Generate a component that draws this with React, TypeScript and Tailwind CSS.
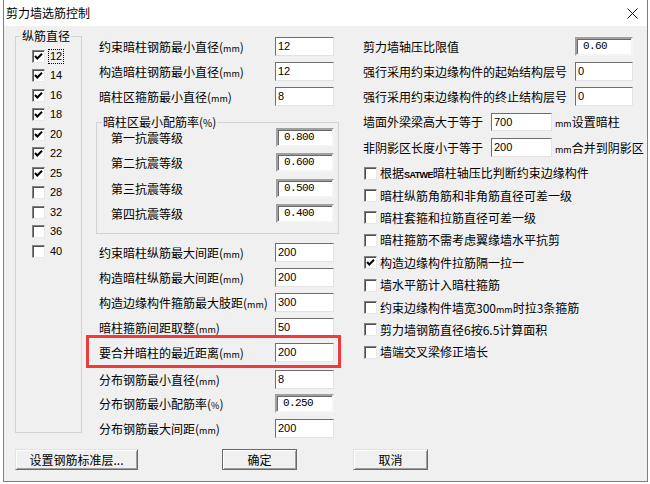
import React from "react";

type Kind = "n" | "s";

function Edit({ v, w, k = "n", h = "h-[19px]" }: { v: string; w: string; k?: Kind; h?: string }) {
  const base =
    k === "s"
      ? "border-2 border-t-[#a0a0a0] border-l-[#a0a0a0] border-r-[#f4f4f4] border-b-[#f4f4f4] shadow-[inset_1px_1px_0_#696969] font-['Liberation_Mono',monospace] text-[11px] tracking-[-0.6px]"
      : "border border-t-[#6d6d6d] border-l-[#6d6d6d] border-r-[#e3e3e3] border-b-[#e3e3e3] pl-[2px] font-['Liberation_Sans',sans-serif] text-[11px]";
  return (
    <div className={`${w} ${h} ${base} bg-white flex items-center leading-none text-black whitespace-pre shrink-0`}>
      {v}
    </div>
  );
}

function Box({ checked }: { checked?: boolean }) {
  return (
    <span className="w-[13px] h-[13px] shrink-0 bg-white border border-t-[#808080] border-l-[#808080] border-r-[#e8e8e8] border-b-[#e8e8e8] shadow-[inset_1px_1px_0_#505050] flex items-center justify-center">
      {checked && (
        <svg width="11" height="11" viewBox="0 0 11 11">
          <path d="M2 5 L4.3 7.5 L9 2.8" stroke="#000" strokeWidth="2" fill="none" />
        </svg>
      )}
    </span>
  );
}

function L({ t, u }: { t: string; u?: string }) {
  return (
    <span className="leading-none whitespace-nowrap">
      {t}
      {u && (
        <>
          (<span className="text-[9px]">{u}</span>)
        </>
      )}
    </span>
  );
}

const leftChecks: [string, boolean][] = [
  ["12", true],
  ["14", true],
  ["16", true],
  ["18", true],
  ["20", true],
  ["22", true],
  ["25", true],
  ["28", false],
  ["32", false],
  ["36", false],
  ["40", false],
];

const lower: { t: string; u: string; v: string; k?: Kind; mt: string }[] = [
  { t: "约束暗柱纵筋最大间距", u: "mm", v: "200", mt: "mt-[9px]" },
  { t: "构造暗柱纵筋最大间距", u: "mm", v: "200", mt: "mt-[6px]" },
  { t: "构造边缘构件箍筋最大肢距", u: "mm", v: "300", mt: "mt-[6px]" },
  { t: "暗柱箍筋间距取整", u: "mm", v: "50", mt: "mt-[6px]" },
  { t: "要合并暗柱的最近距离", u: "mm", v: "200", mt: "mt-[6px]" },
  { t: "分布钢筋最小直径", u: "mm", v: "8", mt: "mt-[8px]" },
  { t: "分布钢筋最小配筋率", u: "%", v: " 0.250", k: "s", mt: "mt-[5px]" },
  { t: "分布钢筋最大间距", u: "mm", v: "200", mt: "mt-[6px]" },
];

const grp: { t: string; v: string; mt: string }[] = [
  { t: "第一抗震等级", v: " 0.800", mt: "mt-0" },
  { t: "第二抗震等级", v: " 0.600", mt: "mt-[6px]" },
  { t: "第三抗震等级", v: " 0.500", mt: "mt-[7px]" },
  { t: "第四抗震等级", v: " 0.400", mt: "mt-[6px]" },
];

const rightChecks: { node: React.ReactNode; c?: boolean }[] = [
  {
    node: (
      <>
        根据<span className="text-[9px] font-bold tracking-[-0.6px] font-['Liberation_Sans',sans-serif]">SATWE</span>暗柱轴压比判断约束边缘构件
      </>
    ),
  },
  { node: "暗柱纵筋角筋和非角筋直径可差一级" },
  { node: "暗柱套箍和拉筋直径可差一级" },
  { node: "暗柱箍筋不需考虑翼缘墙水平抗剪" },
  { node: "构造边缘构件拉筋隔一拉一", c: true },
  { node: "墙水平筋计入暗柱箍筋" },
  {
    node: (
      <>
        约束边缘构件墙宽300<span className="text-[9px]">mm</span>时拉3条箍筋
      </>
    ),
  },
  { node: "剪力墙钢筋直径6按6.5计算面积" },
  { node: "墙端交叉梁修正墙长" },
];

const btn =
  "h-[21px] bg-[#f0f0f0] border border-t-[#e3e3e3] border-l-[#e3e3e3] border-r-[#696969] border-b-[#696969] shadow-[inset_1px_1px_0_#ffffff,inset_-1px_-1px_0_#a0a0a0] flex items-center justify-center leading-none text-[12px] shrink-0";

export default function App() {
  return (
    <div className="relative w-[650px] h-[484px] bg-white overflow-hidden font-['Noto_Sans_CJK_SC','Noto_Sans',sans-serif] text-[12px] text-black">
      <div className="ml-[3px] w-[645px] h-[482px] border-x border-b border-[#7f7f7f] bg-[#f0f0f0] flex flex-col">
        {/* title bar */}
        <div className="h-[26px] bg-white flex items-center pl-[2px] shrink-0">
          <span className="leading-none text-[12px]">剪力墙选筋控制</span>
          <svg className="ml-auto mr-[9px]" width="11" height="11" viewBox="0 0 11 11">
            <path d="M0.5 0.5L10.5 10.5M10.5 0.5L0.5 10.5" stroke="#111" strokeWidth="1" />
          </svg>
        </div>

        {/* body */}
        <div className="flex-1 flex flex-col">
          <div className="flex h-[413px] shrink-0">
            {/* left group */}
            <div className="ml-[11px] mt-[10px] w-[67px] h-[397px] relative border border-[#d3d3d3] shrink-0">
              <span className="absolute left-[5px] top-[-8px] h-[14px] px-[1px] bg-[#f0f0f0] leading-[14px] text-[12px]">
                纵筋直径
              </span>
              <div className="pt-[9.25px] pl-[16px] flex flex-col">
                {leftChecks.map(([n, c], i) => (
                  <div key={n} className="h-[19.5px] flex items-center">
                    <Box checked={c} />
                    <span
                      className={`ml-[3px] leading-none font-['Liberation_Sans',sans-serif] text-[11px] px-[1px] py-[1px] border border-dotted ${
                        i === 0 ? "border-black" : "border-transparent"
                      }`}
                    >
                      {n}
                    </span>
                  </div>
                ))}
              </div>
            </div>

            {/* middle column */}
            <div className="ml-[14px] w-[243px] flex flex-col shrink-0">
              <div className="mt-[11px] h-[19px] flex items-center">
                <div className="w-[179px] pl-[3px] shrink-0">
                  <L t="约束暗柱钢筋最小直径" u="mm" />
                </div>
                <Edit v="12" w="w-[59px]" />
              </div>
              <div className="mt-[6px] h-[19px] flex items-center">
                <div className="w-[179px] pl-[3px] shrink-0">
                  <L t="构造暗柱钢筋最小直径" u="mm" />
                </div>
                <Edit v="12" w="w-[59px]" />
              </div>
              <div className="mt-[6px] h-[19px] flex items-center">
                <div className="w-[179px] pl-[3px] shrink-0">
                  <L t="暗柱区箍筋最小直径" u="mm" />
                </div>
                <Edit v="8" w="w-[59px]" />
              </div>

              <div className="mt-[16px] h-[112px] relative border border-[#d3d3d3]">
                <span className="absolute left-[5px] top-[-8px] h-[14px] px-[1px] bg-[#f0f0f0] leading-[14px] whitespace-nowrap">
                  暗柱区最小配筋率(<span className="text-[10px]">%</span>)
                </span>
                <div className="pt-[5px] flex flex-col">
                  {grp.map((r) => (
                    <div key={r.t} className={`${r.mt} h-[19px] flex items-center`}>
                      <div className="w-[179px] pl-[14px] shrink-0">
                        <L t={r.t} />
                      </div>
                      <Edit v={r.v} w="w-[58px]" k="s" />
                    </div>
                  ))}
                </div>
              </div>

              {lower.map((r) => (
                <div key={r.t} className={`${r.mt} h-[19px] flex items-center`}>
                  <div className="w-[179px] pl-[3px] shrink-0">
                    <L t={r.t} u={r.u} />
                  </div>
                  <Edit v={r.v} w="w-[59px]" k={r.k} />
                </div>
              ))}
            </div>

            {/* right column */}
            <div className="ml-[24px] w-[271px] flex flex-col shrink-0">
              <div className="mt-[11px] h-[19px] flex items-center">
                <div className="w-[212px] shrink-0">
                  <L t="剪力墙轴压比限值" />
                </div>
                <Edit v=" 0.60" w="w-[58px]" k="s" />
              </div>
              <div className="mt-[6px] h-[19px] flex items-center">
                <div className="w-[212px] shrink-0">
                  <L t="强行采用约束边缘构件的起始结构层号" />
                </div>
                <Edit v="0" w="w-[58px]" />
              </div>
              <div className="mt-[6px] h-[19px] flex items-center">
                <div className="w-[212px] shrink-0">
                  <L t="强行采用约束边缘构件的终止结构层号" />
                </div>
                <Edit v="0" w="w-[58px]" />
              </div>
              <div className="mt-[7px] h-[18px] flex items-center">
                <div className="w-[128px] shrink-0">
                  <L t="墙面外梁梁高大于等于" />
                </div>
                <Edit v="700" w="w-[61px]" h="h-[18px]" />
                <span className="ml-[3px] leading-none whitespace-nowrap shrink-0">
                  <span className="text-[9px]">mm</span>设置暗柱
                </span>
              </div>
              <div className="mt-[7px] h-[19px] flex items-center">
                <div className="w-[128px] shrink-0">
                  <L t="非阴影区长度小于等于" />
                </div>
                <Edit v="200" w="w-[61px]" />
                <span className="ml-[3px] leading-none whitespace-nowrap shrink-0">
                  <span className="text-[9px]">mm</span>合并到阴影区
                </span>
              </div>
              <div className="mt-[5px] flex flex-col">
                {rightChecks.map((r, i) => (
                  <div key={i} className="h-[22.4px] flex items-center">
                    <span className="ml-[1px]">
                      <Box checked={r.c} />
                    </span>
                    <span className="ml-[3px] leading-none whitespace-nowrap">{r.node}</span>
                  </div>
                ))}
              </div>
            </div>
          </div>

          {/* buttons */}
          <div className="mt-[10px] h-[21px] flex shrink-0">
            <button className={`${btn} ml-[11px] w-[123px]`}>设置钢筋标准层...</button>
            <button className="ml-[84px] w-[75px] h-[21px] bg-[#f0f0f0] border border-[#696969] shadow-[inset_1px_1px_0_#ffffff,inset_-1px_-1px_0_#a0a0a0] flex items-center justify-center leading-none text-[12px] shrink-0">
              确定
            </button>
            <button className={`${btn} ml-[56px] w-[75px]`}>取消</button>
          </div>
        </div>
      </div>

      {/* red annotation rectangle */}
      <div className="absolute left-[86px] top-[335px] w-[255px] h-[33px] border-[3px] border-[#ee3b3b] pointer-events-none" />
    </div>
  );
}
